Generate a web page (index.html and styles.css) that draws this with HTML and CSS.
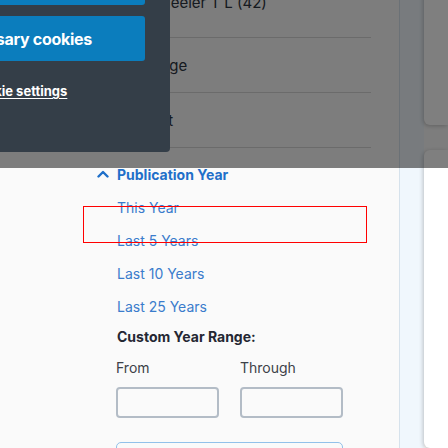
FILE: index.html
```html
<!DOCTYPE html>
<html lang="en">
<head>
<meta charset="utf-8">
<title>Search results</title>
<link rel="stylesheet" href="styles.css">
</head>
<body>
<div class="page">
  <main class="facets">
    <ul class="rows">
      <li class="row row-author"><span class="author">Wheeler T L (42)</span></li>
      <li class="row">Language</li>
      <li class="row">Content</li>
    </ul>
    <section class="facet">
      <h2 class="facet-head">
        <svg class="chev" width="12" height="8" viewBox="0 0 12 8"><path d="M1.5 6.5 L6 2 L10.5 6.5" fill="none" stroke="#1f6fc9" stroke-width="2.4" stroke-linecap="round" stroke-linejoin="round"/></svg>
        <span>Publication Year</span>
      </h2>
      <ul class="options">
        <li class="opt">This Year</li>
        <li class="opt">Last 5 Years</li>
        <li class="opt">Last 10 Years</li>
        <li class="opt">Last 25 Years</li>
      </ul>
      <div class="custom">
        <p class="custom-label">Custom Year Range:</p>
        <div class="range">
          <label class="field"><span class="field-label">From</span><input class="year" type="text"></label>
          <label class="field"><span class="field-label">Through</span><input class="year" type="text"></label>
        </div>
        <button class="apply" type="button">Apply</button>
      </div>
    </section>
  </main>
  <aside class="side">
    <div class="strip"></div>
    <div class="cards">
      <div class="card card-top"></div>
      <div class="card card-bottom"></div>
    </div>
  </aside>
</div>
<div class="highlight"></div>
<div class="overlay"></div>
<div class="cookie-panel">
  <button class="cookie-btn" type="button">Accept all cookies</button>
  <button class="cookie-btn" type="button">Accept only necessary cookies</button>
  <a class="cookie-link" href="#">Cookie settings</a>
</div>
</body>
</html>
```
FILE: styles.css
```css
* { box-sizing: border-box; }
html, body { margin: 0; padding: 0; }
body {
  width: 448px;
  height: 448px;
  overflow: hidden;
  background: #fafafa;
  font-family: "Inter", "Noto Sans", sans-serif;
  position: relative;
}
ul { list-style: none; margin: 0; padding: 0; }
p, h2 { margin: 0; }

.page {
  display: flex;
  height: 448px;
}
.facets {
  width: 399px;
  flex: none;
  padding: 0 28px 0 20px;
}
.rows { margin-top: -17px; }
.row {
  height: 55px;
  border-bottom: 1px solid #d6d6d6;
  display: flex;
  align-items: center;
  padding-left: 97px;
  font-size: 15px;
  color: #2d3440;
}
.row-author { align-items: flex-start; padding-top: 10px; padding-left: 127px; font-size: 15px; }

.facet { margin-top: 16px; }
.facet-head {
  height: 20px;
  display: flex;
  align-items: center;
  gap: 8px;
  padding-left: 77px;
  font-size: 14px;
  font-weight: 700;
  color: #1f6fc9;
}
.chev { display: block; }
.options {
  margin-top: 7px;
  padding-left: 97px;
}
.opt {
  height: 33px;
  line-height: 33px;
  font-size: 14px;
  color: #3a7ccc;
}
.custom { padding-left: 96px; }
.custom-label {
  margin-top: 4px;
  height: 20px;
  line-height: 20px;
  font-size: 14px;
  font-weight: 700;
  color: #242733;
  padding-left: 1px;
}
.range {
  display: flex;
  gap: 21px;
  margin-top: 12px;
}
.field {
  width: 103px;
  display: flex;
  flex-direction: column;
  gap: 10px;
}
.field-label {
  height: 18px;
  line-height: 18px;
  font-size: 14px;
  color: #3d4148;
}
.year {
  width: 103px;
  height: 31px;
  border: 2px solid #b3bcc6;
  border-radius: 4px;
  background: #fafafa;
  margin: 0;
}
.apply {
  display: block;
  margin-top: 24px;
  width: 227px;
  height: 34px;
  border: 1.5px solid #92c1ea;
  border-radius: 5px;
  background: #fafafa;
  color: #fafafa;
  font-family: inherit;
}

.side {
  flex: 1;
  display: flex;
}
.strip {
  width: 25px;
  background: #f0f7fd;
  border-left: 1px solid #d6e2ec;
}
.cards {
  flex: 1;
  display: flex;
  flex-direction: column;
  gap: 25px;
}
.card {
  background: #ffffff;
  border-radius: 6px 0 0 6px;
  box-shadow: -1px 1px 4px rgba(0,0,0,0.22);
}
.card-top { height: 135px; margin-top: -10px; }
.card-bottom { flex: 1; }

.highlight {
  position: absolute;
  left: 83px;
  top: 206px;
  width: 284px;
  height: 37px;
  border: 1.5px solid #ff0000;
}
.overlay {
  position: absolute;
  left: 0;
  top: 0;
  width: 448px;
  height: 168px;
  background: rgba(0,0,0,0.5);
}
.cookie-panel {
  position: absolute;
  left: -230px;
  top: 0;
  width: 400px;
  height: 152px;
  background: #343e48;
  border-radius: 0 0 4px 0;
  padding: 0 25px;
  display: flex;
  flex-direction: column;
  align-items: stretch;
}
.cookie-btn {
  height: 45px;
  border: none;
  border-radius: 3px;
  background: #0b7dbd;
  color: #ffffff;
  font-family: "Inter", sans-serif;
  font-size: 16px;
  font-weight: 700;
  letter-spacing: -0.3px;
  text-align: center;
  padding: 0 0 0 8px;
}
.cookie-btn:first-child { margin-top: -40px; }
.cookie-btn + .cookie-btn { margin-top: 11px; }
.cookie-link {
  margin-top: 22px;
  align-self: center;
  margin-left: 96px;
  color: #ffffff;
  font-size: 13px;
  font-weight: 700;
  text-decoration: underline;
  text-underline-offset: 2px;
}
```
